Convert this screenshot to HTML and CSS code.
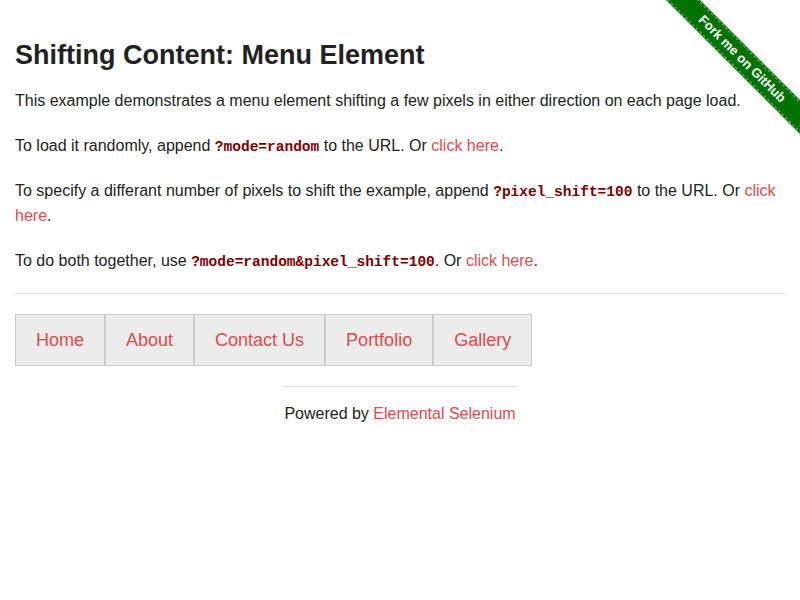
FILE: index.html
```html
<!DOCTYPE html>
<html>
<head>
<meta charset="utf-8">
<title>The Internet</title>
<link rel="stylesheet" href="styles.css">
</head>
<body>
<div class="ribbon-wrap"><a class="ribbon" href="#">Fork me on GitHub</a></div>
<div class="page">
  <h3 class="title">Shifting Content: Menu Element</h3>
  <p class="para">This example demonstrates a menu element shifting a few pixels in either direction on each page load.</p>
  <p class="para">To load it randomly, append <code class="code">?mode=random</code> to the URL. Or <a class="link" href="#">click here</a>.</p>
  <p class="para">To specify a differant number of pixels to shift the example, append <code class="code">?pixel_shift=100</code> to the URL. Or <a class="link" href="#">click here</a>.</p>
  <p class="para">To do both together, use <code class="code">?mode=random&amp;pixel_shift=100</code>. Or <a class="link" href="#">click here</a>.</p>
  <hr class="rule">
  <ul class="menu">
    <li class="menu-item"><a class="link" href="#">Home</a></li>
    <li class="menu-item"><a class="link" href="#">About</a></li>
    <li class="menu-item"><a class="link" href="#">Contact Us</a></li>
    <li class="menu-item"><a class="link" href="#">Portfolio</a></li>
    <li class="menu-item"><a class="link" href="#">Gallery</a></li>
  </ul>
  <div class="footer">
    <hr class="footer-rule">
    <div class="footer-text">Powered by <a class="link" href="#">Elemental Selenium</a></div>
  </div>
</div>
</body>
</html>
```
FILE: styles.css
```css
html, body {
  margin: 0;
  padding: 0;
  background: #fff;
}
body {
  font-family: "Liberation Sans", Arial, sans-serif;
  font-size: 16px;
  line-height: 25px;
  color: #222;
}
.page {
  padding: 40px 15px 0;
}
.title {
  font-size: 27px;
  line-height: 30px;
  font-weight: bold;
  margin: 0 0 18px;
  color: #222;
}
.para {
  margin: 0 0 20px;
}
.code {
  font-family: "Liberation Mono", "DejaVu Sans Mono", monospace;
  font-weight: bold;
  font-size: 14.5px;
  line-height: 1;
  color: #7f0000;
}
.link {
  color: #de4b4b;
  text-decoration: none;
}
.rule {
  border: 0;
  border-top: 1px solid #ddd;
  margin: 20px 0;
  height: 0;
}
.menu {
  display: flex;
  list-style: none;
  margin: 0;
  padding: 0;
}
.menu-item {
  background: #ececec;
  border: 1px solid #ccc;
  padding: 13px 20px 12px;
  font-size: 18px;
  line-height: 25px;
}
.footer {
  display: flex;
  flex-direction: column;
  align-items: center;
}
.footer-rule {
  width: 236px;
  border: 0;
  border-top: 1px solid #ddd;
  height: 0;
  margin: 20px 0 14px;
}
.footer-text {
  text-align: center;
}
.ribbon-wrap {
  position: absolute;
  top: 0;
  right: 0;
  width: 149px;
  height: 149px;
  overflow: hidden;
}
.ribbon {
  position: absolute;
  left: -19px;
  top: 48px;
  width: 220px;
  height: 22px;
  box-sizing: border-box;
  transform: rotate(45deg);
  background: #007200;
  color: #fff;
  font-family: "Liberation Sans", Arial, sans-serif;
  font-weight: bold;
  font-size: 13px;
  line-height: 16px;
  text-align: center;
  text-decoration: none;
  border-top: 1px dashed rgba(255,255,255,0.5);
  border-bottom: 1px dashed rgba(255,255,255,0.5);
  box-shadow: 0 0 0 1px #007200;
  padding-top: 2px;
}
```
